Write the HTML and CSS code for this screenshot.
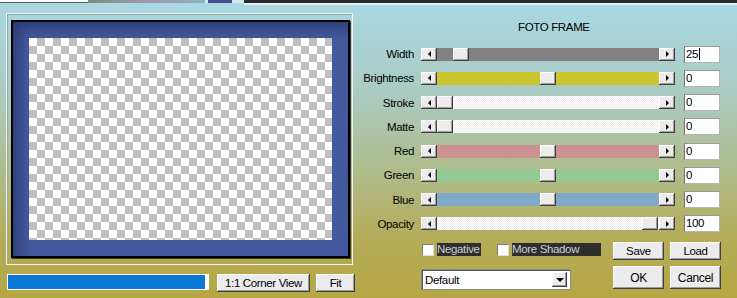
FILE: index.html
```html
<!DOCTYPE html>
<html lang="en">
<head>
  <meta charset="UTF-8">
  <title>Foto Frame</title>
  <link rel="stylesheet" href="styles.css">
</head>
<body>

<!-- ust serit (pencerenin arkasi) -->
<div class="strip">
  <span class="s-white"></span>
  <span class="s-img"></span>
  <span class="s-light"></span>
  <span class="s-blue"></span>
  <span class="s-light2"></span>
  <span class="s-dark"></span>
</div>

<div class="main">

  <!-- onizleme -->
  <div class="left">
    <div class="preview">
      <div class="frame">
        <div class="checker"></div>
      </div>
    </div>
    <div class="bar">
      <div class="progress"><div class="fill"></div></div>
      <button class="btn corner">1:1 Corner View</button>
      <button class="btn fit">Fit</button>
    </div>
  </div>

  <!-- ayarlar -->
  <div class="panel">
    <div class="title">FOTO FRAME</div>

    <div class="row">
      <label>Width</label>
      <div class="slider">
        <span class="btn arrow"><i class="tri-left"></i></span>
        <div class="track t-gray"><span class="btn thumb" style="left:16px"></span></div>
        <span class="btn arrow"><i class="tri-right"></i></span>
      </div>
      <div class="value">25<span class="caret"></span></div>
    </div>

    <div class="row">
      <label>Brightness</label>
      <div class="slider">
        <span class="btn arrow"><i class="tri-left"></i></span>
        <div class="track t-yellow"><span class="btn thumb" style="left:103px"></span></div>
        <span class="btn arrow"><i class="tri-right"></i></span>
      </div>
      <div class="value">0</div>
    </div>

    <div class="row">
      <label>Stroke</label>
      <div class="slider">
        <span class="btn arrow"><i class="tri-left"></i></span>
        <div class="track t-white"><span class="btn thumb" style="left:0px"></span></div>
        <span class="btn arrow"><i class="tri-right"></i></span>
      </div>
      <div class="value">0</div>
    </div>

    <div class="row">
      <label>Matte</label>
      <div class="slider">
        <span class="btn arrow"><i class="tri-left"></i></span>
        <div class="track t-white"><span class="btn thumb" style="left:0px"></span></div>
        <span class="btn arrow"><i class="tri-right"></i></span>
      </div>
      <div class="value">0</div>
    </div>

    <div class="row">
      <label>Red</label>
      <div class="slider">
        <span class="btn arrow"><i class="tri-left"></i></span>
        <div class="track t-red"><span class="btn thumb" style="left:103px"></span></div>
        <span class="btn arrow"><i class="tri-right"></i></span>
      </div>
      <div class="value">0</div>
    </div>

    <div class="row">
      <label>Green</label>
      <div class="slider">
        <span class="btn arrow"><i class="tri-left"></i></span>
        <div class="track t-green"><span class="btn thumb" style="left:103px"></span></div>
        <span class="btn arrow"><i class="tri-right"></i></span>
      </div>
      <div class="value">0</div>
    </div>

    <div class="row">
      <label>Blue</label>
      <div class="slider">
        <span class="btn arrow"><i class="tri-left"></i></span>
        <div class="track t-blue"><span class="btn thumb" style="left:103px"></span></div>
        <span class="btn arrow"><i class="tri-right"></i></span>
      </div>
      <div class="value">0</div>
    </div>

    <div class="row">
      <label>Opacity</label>
      <div class="slider">
        <span class="btn arrow"><i class="tri-left"></i></span>
        <div class="track t-white"><span class="btn thumb" style="left:205px"></span></div>
        <span class="btn arrow"><i class="tri-right"></i></span>
      </div>
      <div class="value">100</div>
    </div>

    <div class="bottom">
      <div class="opts">
        <div class="checks">
          <span class="box"></span>
          <span class="chk-label neg">Negative</span>
          <span class="box box2"></span>
          <span class="chk-label more">More Shadow</span>
        </div>
        <div class="select">
          <span>Default</span>
          <span class="btn sel-arrow"><i class="tri-down"></i></span>
        </div>
      </div>
      <div class="buttons">
        <button class="btn">Save</button>
        <button class="btn">Load</button>
        <button class="btn big">OK</button>
        <button class="btn big">Cancel</button>
      </div>
    </div>
  </div>

</div>

</body>
</html>
```

FILE: styles.css
```css
* {
  box-sizing: border-box;
}

body {
  margin: 0;
  width: 737px;
  height: 298px;
  overflow: hidden;
  font-family: "Liberation Sans", Arial, sans-serif;
  font-size: 11.5px;
  letter-spacing: -0.35px;
  color: #000;
  background: linear-gradient(180deg, #a9d8e5 0px, #aacbc2 90px, #afbc8c 170px, #b4ac58 240px, #b6a744 298px);
}

/* Ust serit */
.strip {
  display: flex;
  height: 5px;
}
.strip span {
  display: block;
  height: 3px;
}
.s-white {
  width: 88px;
  background: #f8f8f8;
  border-bottom: 1px solid #5a5a5a;
}
.s-img {
  width: 117px;
  background: linear-gradient(90deg, #7d8a6c, #8e949c, #a197ab, #98a3b4, #8db2c0);
}
.s-light {
  width: 3px;
  background: #d6edf2;
}
.s-blue {
  width: 24px;
  background: #40508f;
}
.s-light2 {
  width: 12px;
  background: #cfe8ee;
}
.strip .s-dark {
  flex: 1;
  height: 5px;
  background: #2b2b2b;
  border-bottom: 2px solid #e2f0f3;
}

.main {
  display: flex;
}

/* Onizleme */
.left {
  width: 358px;
  padding-left: 6px;
  padding-top: 8px;
}

.preview {
  width: 347px;
  height: 252px;
  border: 1px solid #f2f6f2;
  box-shadow: inset 1px 1px 0 #93a8a8;
  padding: 6px 2px 6px 4px;
}

.frame {
  width: 339px;
  height: 238px;
  border: 2px solid #000;
  background: #43599e;
  box-shadow: inset 10px 10px 14px -4px rgba(10, 15, 50, 0.4), 1px 1px 0 #3a3a3a;
  padding: 16px;
}

.checker {
  width: 100%;
  height: 100%;
  background: repeating-conic-gradient(#c0c0c0 0 25%, #fff 0 50%) 0 0 / 16px 16px;
}

.bar {
  display: flex;
  align-items: flex-start;
  margin-top: 9px;
}

.progress {
  width: 202px;
  height: 16px;
  margin-left: 1px;
  border: 1px solid #fff;
  background: #fff;
}
.progress .fill {
  width: 197px;
  height: 100%;
  background: #0a78d7;
}

/* Dugmeler */
.btn {
  font: inherit;
  letter-spacing: inherit;
  color: #000;
  padding: 0;
  border: none;
  background: #ececec;
  box-shadow: inset -1px -1px 0 #404040, inset 1px 1px 0 #fff, inset -2px -2px 0 #9c9c9c;
}

.corner {
  width: 93px;
  height: 18px;
  margin-left: 8px;
}
.fit {
  width: 39px;
  height: 18px;
  margin-left: 6px;
}

/* Ayar paneli */
.panel {
  flex: 1;
}

.title {
  padding: 16px 0 0 160px;
  line-height: 13px;
  height: 37px;
}

.row {
  display: flex;
  align-items: center;
  height: 24.25px;
}
.row label {
  width: 56px;
  margin-right: 7px;
  text-align: right;
}

.slider {
  display: flex;
  width: 254px;
  height: 13px;
}

.arrow {
  display: flex;
  align-items: center;
  justify-content: center;
  width: 16px;
  height: 13px;
}

.tri-left,
.tri-right,
.tri-down {
  display: block;
  width: 0;
  height: 0;
}
.tri-left {
  border-top: 3px solid transparent;
  border-bottom: 3px solid transparent;
  border-right: 3px solid #000;
}
.tri-right {
  border-top: 3px solid transparent;
  border-bottom: 3px solid transparent;
  border-left: 3px solid #000;
}
.tri-down {
  border-left: 4px solid transparent;
  border-right: 4px solid transparent;
  border-top: 4px solid #000;
}

.track {
  position: relative;
  width: 222px;
  height: 13px;
}
.t-gray { background: #838083; }
.t-yellow { background: #cbc630; }
.t-red { background: #cc9292; }
.t-green { background: #94c994; }
.t-blue { background: #7fa8c9; }
.t-white {
  background: repeating-conic-gradient(#fff 0 25%, #ededed 0 50%) 0 0 / 2px 2px;
}

.thumb {
  position: absolute;
  top: 0;
  width: 16px;
  height: 13px;
}

.value {
  display: flex;
  align-items: flex-start;
  margin-left: 9px;
  width: 36px;
  height: 17px;
  padding: 1px 0 0 1px;
  line-height: 13px;
  background: #fff;
  border: 1px solid;
  border-color: #9a9a9a #b4b4b4 #b4b4b4 #6e6e6e;
}
.caret {
  width: 1px;
  height: 12px;
  margin-left: 1px;
  background: #000;
}

/* Alt kisim */
.bottom {
  display: flex;
  margin-left: 63px;
  margin-top: 6px;
}

.opts {
  width: 192px;
}

.checks {
  display: flex;
  align-items: flex-start;
  height: 18px;
  padding-top: 1px;
}
.box {
  width: 12px;
  height: 12px;
  margin: 1px 3px 0 1px;
  background: #fff;
  border: 1px solid;
  border-color: #7c7c7c #dcdcdc #dcdcdc #7c7c7c;
}
.box2 {
  margin-left: 16px;
}
.chk-label {
  height: 13px;
  line-height: 13px;
  background: #2e2e2e;
  color: #cfcfcf;
}
.neg {
  width: 44px;
}
.more {
  width: 89px;
}

.select {
  display: flex;
  align-items: center;
  justify-content: space-between;
  width: 150px;
  height: 21px;
  margin-top: 9px;
  padding: 0 3px 0 3px;
  background: #fff;
  border: 1px solid #8c8c8c;
  box-shadow: inset 1px 1px 0 #505050;
}
.sel-arrow {
  display: flex;
  align-items: center;
  justify-content: center;
  width: 15px;
  height: 15px;
}

.buttons {
  display: grid;
  grid-template-columns: 51px 51px;
  grid-template-rows: 18px 23px;
  column-gap: 6px;
  row-gap: 6px;
}
.buttons .big {
  font-size: 12px;
}
```
